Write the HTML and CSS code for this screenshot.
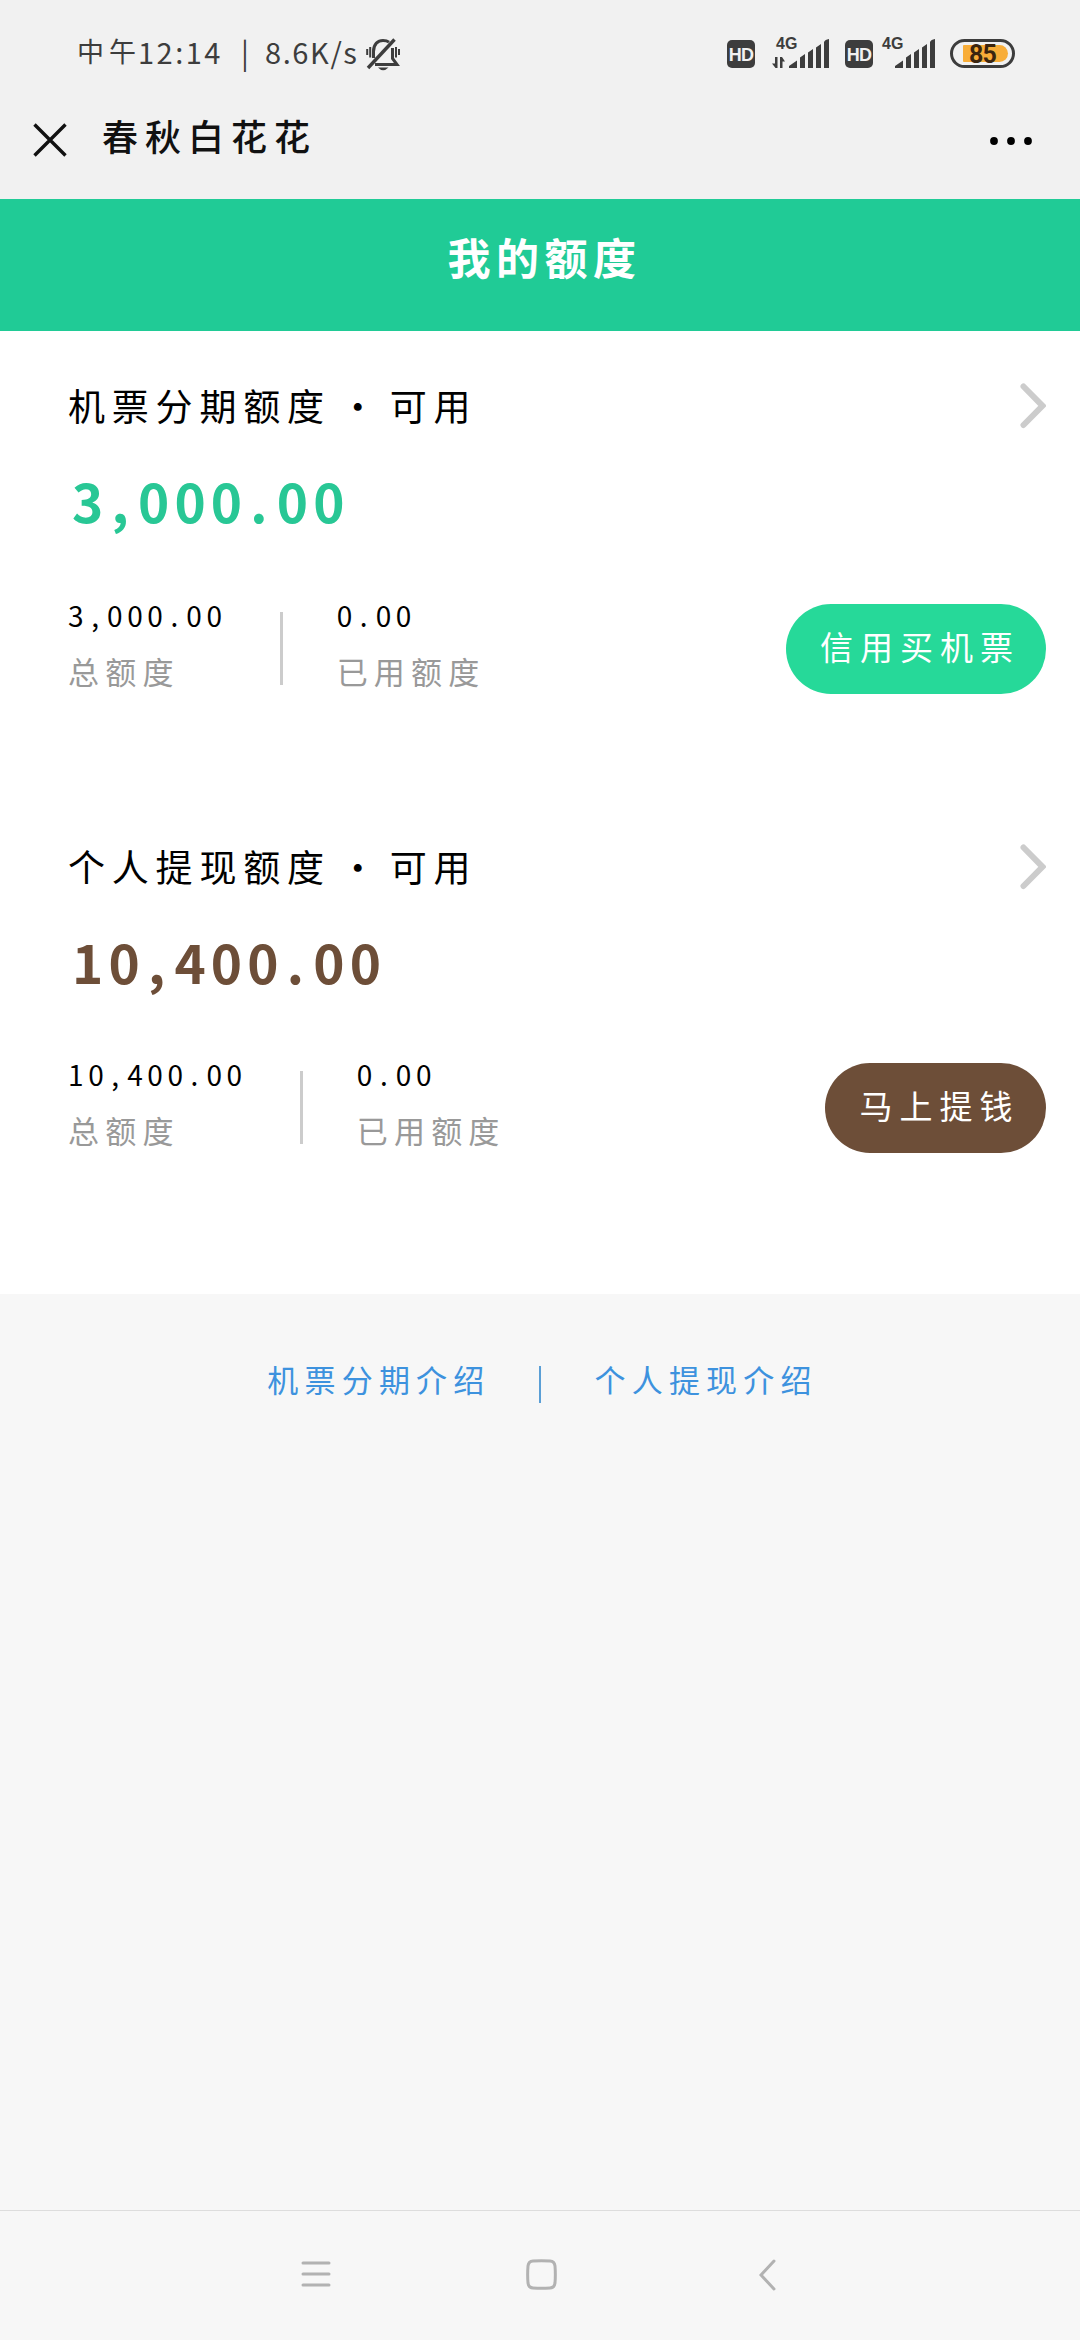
FILE: index.html
```html
<!DOCTYPE html>
<html lang="zh-CN">
<head>
<meta charset="utf-8">
<title>我的额度</title>
<link rel="stylesheet" href="styles.css">
</head>
<body>
<div class="statusbar">
  <div class="status-left">
    <span class="period">中午</span><span class="clock">12:14</span><span class="sep">|</span><span class="speed">8.6K/s</span>
    <svg class="bell" viewBox="0 0 34 34" width="34" height="34" fill="none" stroke="#3d3d3d" stroke-width="3">
      <path d="M7.500 20V13.500C7.500 6 12 2.400 17 2.400C19.600 2.400 21.500 3 23 4.200M26.500 10V20.500L31 26.600H9"/>
      <path d="M2 30L28.500 1.500" stroke-width="3.400"/>
      <path d="M1.200 11V17M4.200 9V19.500M30 9V19.500M33 11V17" stroke-width="2"/>
      <path d="M12 29.500H22.500Q17 35 12 29.500Z" fill="#3d3d3d" stroke="none"/>
    </svg>
  </div>
  <div class="status-right">
    <span class="hd">HD</span>
    <div class="signal">
      <span class="net">4G</span>
      <svg viewBox="0 0 57 30" width="57" height="30" fill="#3d3d3d">
        <path d="M3 18H5.500V29H3.500L0 24.500H3ZM8 18H10L13 22.500H10.500V29H8Z"/>
        <path d="M17 29V27L25 21.500V29ZM28 29V18.500L33 15V29ZM36 29V13.500L41 10V29ZM44 29V8.500L49 5V29ZM52 29V3Q53 .5 57 0V29Z"/>
      </svg>
    </div>
    <span class="hd second">HD</span>
    <div class="signal narrow">
      <span class="net">4G</span>
      <svg viewBox="16 0 41 30" width="41" height="30" fill="#3d3d3d">
        <path d="M17 29V27L25 21.500V29ZM28 29V18.500L33 15V29ZM36 29V13.500L41 10V29ZM44 29V8.500L49 5V29ZM52 29V3Q53 .5 57 0V29Z"/>
      </svg>
    </div>
    <div class="battery"><span class="charge">85</span></div>
  </div>
</div>
<header class="titlebar">
  <svg class="close" viewBox="0 0 34 34" width="34" height="34" stroke="#111" stroke-width="3.400"><path d="M1.500 1.500L32.500 32.500M32.500 1.500L1.500 32.500"/></svg>
  <h1 class="site">春秋白花花</h1>
  <svg class="more" viewBox="0 0 42 8" width="42" height="8"><circle cx="4" cy="4" r="3.900"/><circle cx="21" cy="4" r="3.900"/><circle cx="38" cy="4" r="3.900"/></svg>
</header>
<h2 class="banner">我的额度</h2>
<main class="quotas">
  <section class="quota">
    <div class="quota-head">
      <h3 class="name">机票分期额度<span class="dot">·</span>可用</h3>
      <svg class="chevron" viewBox="0 0 26 46" width="26" height="46"><path d="M3.500 3.500L22.500 22.800L3.500 42"/></svg>
    </div>
    <p class="amount green">3<i>,</i>000<i>.</i>00</p>
    <div class="detail">
      <div class="stat"><p class="value">3<i>,</i>000<i>.</i>00</p><p class="label">总额度</p></div>
      <div class="stat used"><p class="value">0<i>.</i>00</p><p class="label">已用额度</p></div>
      <a class="action buy">信用买机票</a>
    </div>
  </section>
  <section class="quota cash">
    <div class="quota-head">
      <h3 class="name">个人提现额度<span class="dot">·</span>可用</h3>
      <svg class="chevron" viewBox="0 0 26 46" width="26" height="46"><path d="M3.500 3.500L22.500 22.800L3.500 42"/></svg>
    </div>
    <p class="amount brown">10<i>,</i>400<i>.</i>00</p>
    <div class="detail">
      <div class="stat"><p class="value">10<i>,</i>400<i>.</i>00</p><p class="label">总额度</p></div>
      <div class="stat used"><p class="value">0<i>.</i>00</p><p class="label">已用额度</p></div>
      <a class="action withdraw">马上提钱</a>
    </div>
  </section>
</main>
<div class="links"><a>机票分期介绍</a><span class="bar"></span><a>个人提现介绍</a></div>
<nav class="navbar">
  <svg viewBox="0 0 30 30" width="30" height="30"><path d="M2 4H28M2 15H28M2 26H28"/></svg>
  <svg class="home" viewBox="0 0 31 31" width="31" height="31"><path d="M7 2Q15.500 1.300 24 2Q28.500 2.300 29 7Q29.700 15.500 29 24Q28.500 28.700 24 29Q15.500 29.700 7 29Q2.500 28.700 2 24Q1.300 15.500 2 7Q2.500 2.300 7 2Z"/></svg>
  <svg viewBox="0 0 17 32" width="17" height="32"><path d="M15 2L2 16L15 30"/></svg>
</nav>
</body>
</html>
```

FILE: styles.css
```css
* { box-sizing: border-box; margin: 0; padding: 0; }
body {
  width: 1080px;
  height: 2340px;
  display: flex;
  flex-direction: column;
  background: #f7f7f7;
  font-family: "Noto Sans CJK SC", sans-serif;
  font-weight: 400;
  color: #000;
  overflow: hidden;
}
svg { display: block; flex: none; }
h1, h2, h3, p, span, a { white-space: nowrap; }
i { font-style: normal; }

.statusbar {
  height: 84px;
  padding: 0 65px 0 77px;
  background: #f1f1f1;
  display: flex;
  justify-content: space-between;
  color: #3d3d3d;
}
.status-left {
  display: flex;
  padding-top: 38px;
  height: 72px;
  font-size: 29px;
  line-height: 26px;
}
.period { width: 61px; font-size: 27px; letter-spacing: 5px; }
.clock { width: 103px; letter-spacing: 2.500px; }
.sep { width: 24px; }
.speed { width: 101px; letter-spacing: 1.600px; }
.status-right { display: flex; padding-top: 39px; }
.hd {
  width: 28px;
  height: 28px;
  margin-top: 1px;
  border-radius: 5px;
  background: #3d3d3d;
  color: #f1f1f1;
  font: bold 18px/30px "Liberation Sans", sans-serif;
  letter-spacing: -.8px;
  text-align: center;
}
.hd.second { margin-left: 16px; }
.signal { position: relative; margin-left: 17px; }
.signal.narrow { margin-left: 21px; }
.net {
  position: absolute;
  left: 4px;
  top: -3px;
  font: bold 16px/16px "Liberation Sans", sans-serif;
}
.narrow .net { left: -12px; }
.battery {
  width: 65px;
  height: 29px;
  margin-left: 15px;
  padding: 3px;
  border: 3px solid #3d3d3d;
  border-radius: 15px;
}
.charge {
  display: block;
  width: 45px;
  height: 17px;
  margin-left: 7px;
  border-radius: 1px 9px 9px 1px;
  background: #f8ad38;
  color: #3b2510;
  font: bold 25px/19px Roboto, sans-serif;
  padding-left: 6px;
  letter-spacing: -.8px;
}

.titlebar {
  height: 115px;
  background: #f1f1f1;
  display: flex;
  padding: 0 48px 0 33px;
}
.close { margin-top: 39px; }
.site {
  margin: 25px 0 0 35px;
  font-size: 36px;
  line-height: 52px;
  font-weight: 500;
  letter-spacing: 7px;
  color: #111;
}
.more { margin: 53px 0 0 auto; }

.banner {
  height: 132px;
  background: #20cb96;
  color: #fff;
  text-align: center;
  font-size: 43px;
  line-height: 115px;
  letter-spacing: 5.500px;
  text-indent: 9px;
}

.quotas { height: 963px; background: #fff; padding: 48px 34px 0 68px; }
.quota { height: 461px; }
.quota-head { display: flex; justify-content: space-between; height: 56px; }
.name { font-size: 37px; line-height: 52px; font-weight: 400; letter-spacing: 6.800px; }
.dot { display: inline-block; width: 59px; padding-right: 5px; text-align: center; letter-spacing: 0; }
.chevron { margin-top: 4px; fill: none; stroke: #ccc; stroke-width: 6; stroke-linecap: round; }
.amount { font-size: 53px; line-height: 60px; font-weight: 700; letter-spacing: 5.200px; margin-top: 35px; padding-left: 4px; height: 134px; }
.amount i { padding: 0 4px 0 3px; }
.cash .amount { height: 132px; }
.green { color: #28c795; }
.brown { color: #6d4e38; }
.detail { display: flex; height: 90px; }
.stat { padding-right: 53px; }
.used { position: relative; padding-left: 57px; }
.used::before {
  content: "";
  position: absolute;
  left: 0;
  top: 8px;
  width: 3px;
  height: 73px;
  background: #ccc;
}
.value { font-size: 28px; line-height: 28px; margin-top: -3px; letter-spacing: 4.600px; }
.value i { padding: 0 3.500px 0 3px; }
.label { font-size: 31px; line-height: 40px; margin-top: 22px; letter-spacing: 6.200px; color: #999; }
.action {
  margin-left: auto;
  height: 90px;
  border-radius: 45px;
  color: #fff;
  font-size: 33px;
  line-height: 84px;
  text-align: center;
  letter-spacing: 7px;
  text-indent: 8px;
}
.buy { width: 260px; background: #26d999; }
.withdraw { width: 221px; background: #6d4e38; }

.links {
  height: 916px;
  display: flex;
  justify-content: center;
  padding: 60px 0 0 5px;
  color: #3d92de;
  font-size: 31px;
  line-height: 50px;
  letter-spacing: 6.200px;
}
.bar { width: 2px; height: 37px; margin: 12px 54px 0 48px; background: #5b9fd6; }

.navbar {
  flex: 1;
  border-top: 1px solid #ddd;
  display: flex;
  padding: 48px 304px 0 301px;
  justify-content: space-between;
  fill: none;
  stroke: #b2b2b2;
  stroke-width: 3;
  stroke-linecap: round;
}
.home { margin-right: 8px; }
```
